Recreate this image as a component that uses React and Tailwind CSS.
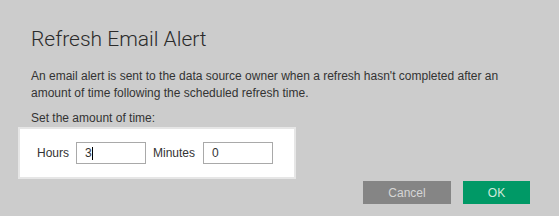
export default function App() {
    return (
        <div
            className="w-[559px] h-[216px] bg-[#cccccc] text-[#333333] pt-[27px] pl-[18px] overflow-hidden"
            style={{ fontFamily: '"Liberation Sans", Arial, sans-serif' }}
        >
            {/* TITLE */}
            <h1
                className="pl-[13px] text-[21px] leading-[24px] font-light text-[#2b2b2b]"
                style={{ fontFamily: 'Roboto, "Liberation Sans", sans-serif' }}
            >
                Refresh Email Alert
            </h1>

            {/* DESCRIPTION */}
            <p className="pl-[13px] mt-[17px] text-[12px] leading-[17px] w-[490px]">
                An email alert is sent to the data source owner when a refresh hasn't completed after an amount of time following the scheduled refresh time.
            </p>

            <p className="pl-[13px] mt-[8px] text-[12px] leading-[17px]">
                Set the amount of time:
            </p>

            {/* TIME BOX */}
            <div className="w-[278px] h-[52px] bg-white border-2 border-[#e6e6e6] flex items-center pl-[17px] text-[12px]">
                <span>Hours</span>
                <div className="ml-[7px] w-[70px] h-[22px] border border-[#a9a9a9] flex items-center pl-[8px]">
                    <span>3</span>
                    <span className="inline-block w-px h-[13px] bg-black ml-[0.5px]"></span>
                </div>
                <span className="ml-[7px]">Minutes</span>
                <div className="ml-[8px] w-[70px] h-[22px] border border-[#a9a9a9] flex items-center pl-[8px]">
                    <span>0</span>
                </div>
            </div>

            {/* ACTIONS */}
            <div className="mt-[2px] flex justify-end gap-[12px] pr-[29px] text-[12px]">
                <button className="w-[88px] h-[23px] bg-[#858585] text-[#d6d6d6]">
                    Cancel
                </button>
                <button className="w-[67px] h-[23px] bg-[#009966] text-[#cfe9dc]">
                    OK
                </button>
            </div>
        </div>
    );
}
